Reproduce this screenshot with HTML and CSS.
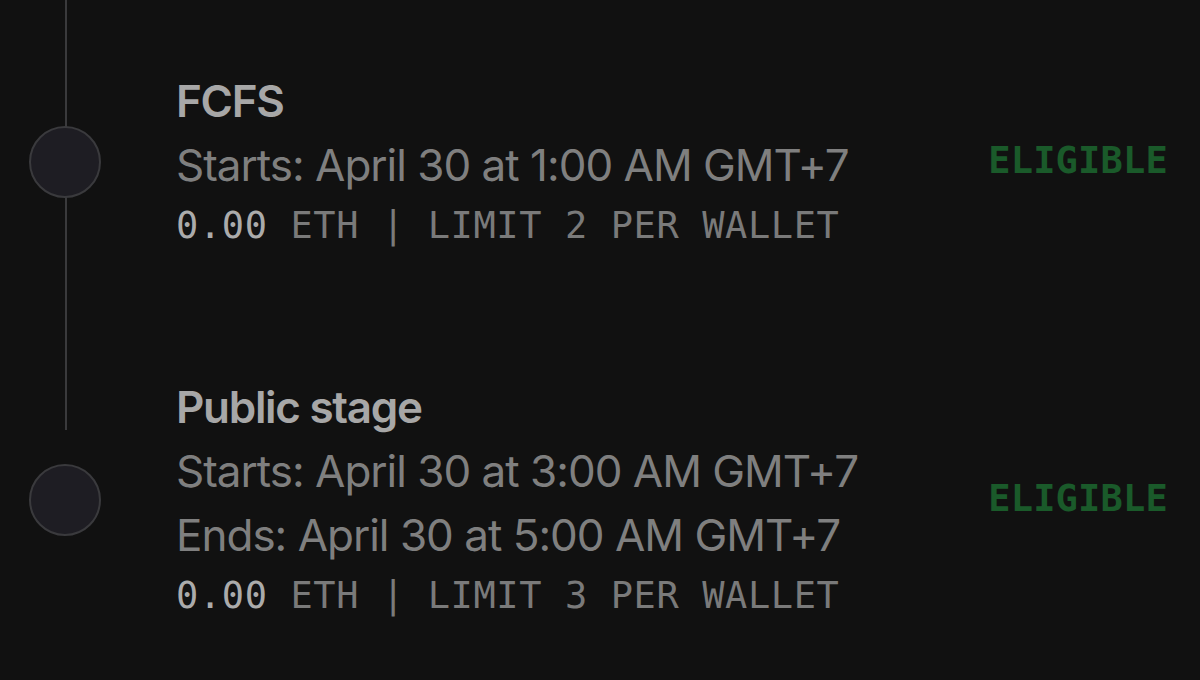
FILE: index.html
```html
<!DOCTYPE html>
<html lang="en">
<head>
<meta charset="utf-8">
<title>Mint stages</title>
<link rel="stylesheet" href="styles.css">
</head>
<body>
<main class="stages">
  <section class="stage stage--connected">
    <div class="rail"><span class="dot"></span></div>
    <div class="info">
      <h2 class="title">FCFS</h2>
      <p class="time">Starts: April 30 at 1:00 AM GMT+7</p>
      <p class="meta"><span class="price">0.00</span> ETH | LIMIT 2 PER WALLET</p>
    </div>
    <div class="status">ELIGIBLE</div>
  </section>
  <section class="stage">
    <div class="rail"><span class="dot"></span></div>
    <div class="info">
      <h2 class="title">Public stage</h2>
      <p class="time">Starts: April 30 at 3:00 AM GMT+7</p>
      <p class="time">Ends: April 30 at 5:00 AM GMT+7</p>
      <p class="meta"><span class="price">0.00</span> ETH | LIMIT 3 PER WALLET</p>
    </div>
    <div class="status">ELIGIBLE</div>
  </section>
</main>
</body>
</html>
```

FILE: styles.css
```css
html, body {
  margin: 0;
  padding: 0;
  background: #111111;
}

body {
  width: 1200px;
  height: 680px;
  overflow: hidden;
  font-family: Inter, "Noto Sans", "Liberation Sans", sans-serif;
}

.stages {
  display: flex;
  flex-direction: column;
  gap: 120px;
  padding: 69px 32px 0 0;
}

.stage {
  display: grid;
  grid-template-columns: 130px 1fr auto;
  column-gap: 46px;
  align-items: center;
}

.rail {
  position: relative;
  display: flex;
  justify-content: center;
  align-self: stretch;
  align-items: center;
}

.stage--connected .rail::before {
  content: "";
  position: absolute;
  left: 65px;
  top: -69px;
  height: 430px;
  width: 2px;
  background: #3a3a3c;
}

.dot {
  position: relative;
  width: 68px;
  height: 68px;
  border-radius: 50%;
  background: #1e1d23;
  border: 2px solid #3a3a3d;
}

.info {
  display: flex;
  flex-direction: column;
}

.title {
  margin: 0;
  font-size: 44px;
  line-height: 64px;
  font-weight: 600;
  color: #a7a7a7;
  letter-spacing: -1.3px;
}

.time {
  margin: 0;
  font-size: 44px;
  line-height: 64px;
  font-weight: 400;
  color: #7f7f7f;
  letter-spacing: -1px;
}

.meta {
  margin: 0;
  font-family: "DejaVu Sans Mono", "Liberation Mono", monospace;
  font-size: 37px;
  line-height: 58px;
  color: #7a7a7a;
  letter-spacing: 0.6px;
  white-space: pre;
}

.price {
  color: #ababab;
}

.status {
  font-family: "DejaVu Sans Mono", "Liberation Mono", monospace;
  font-weight: 700;
  font-size: 37px;
  color: #1a5a2a;
  letter-spacing: 0.2px;
  margin-top: -3px;
}
```
